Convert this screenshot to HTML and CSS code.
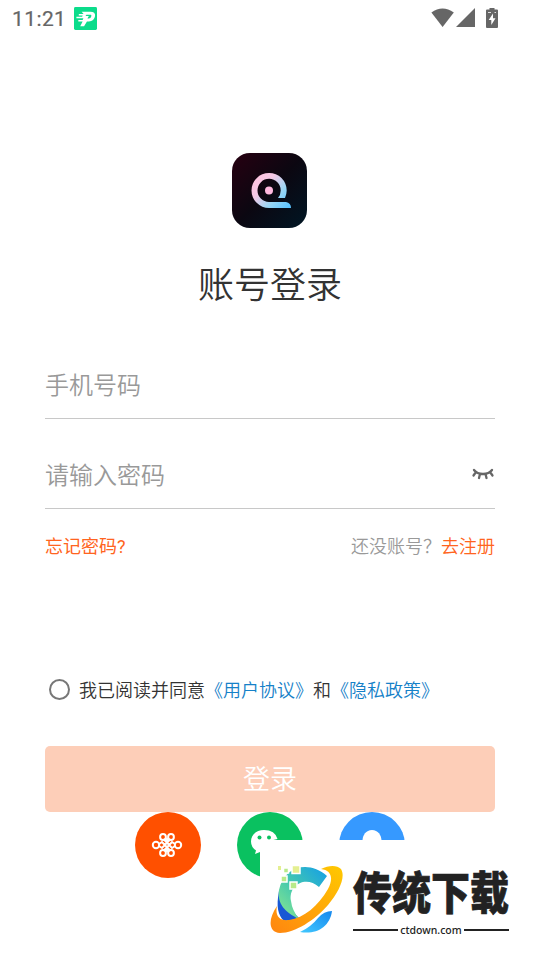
FILE: index.html
```html
<!DOCTYPE html>
<html lang="zh-CN">
<head>
<meta charset="utf-8">
<title>账号登录</title>
<link rel="stylesheet" href="styles.css">
</head>
<body>
<header class="status">
  <span class="clock">11:21</span>
  <svg class="app-badge" width="23" height="23" viewBox="0 0 24 24">
    <rect width="24" height="24" rx="1.5" fill="#0bdc8b"/>
    <path d="M8 5H17Q22.500 5 22 9.500Q21 15 15.500 15H13.500L10.500 20H6.500L9 15H4.500V13.500H9L9.800 11.800H2.500V10.300H8.500L9 8.800H5V7.300H10Z" fill="#fff"/>
    <path d="M13 8H17.500Q18.500 8 18 9.800Q17.500 12 15.500 12H14L15.500 9.500H12Z" fill="#0bdc8b"/>
  </svg>
  <div class="signals">
    <svg width="24" height="20" viewBox="0 0 24 20"><path d="M.4 4.400Q11.500-3.400 22.800 4.400L11.600 19Z" fill="#666"/></svg>
    <svg width="20" height="20" viewBox="0 0 20 20"><path d="M19 0V19H0Z" fill="#666"/></svg>
    <svg class="battery" width="12" height="20" viewBox="0 0 12 20"><path d="M3.500 0H8.500V1.500H11Q12 1.500 12 2.500V19Q12 20 11 20H1Q0 20 0 19V2.500Q0 1.500 1 1.500H3.500Z" fill="#666"/><path d="M7 5.500L2.700 12H5.300V17L9.500 10.300H7Z" fill="#fff"/><path d="M2 4.500H5M8.500 4.500H10" stroke="#ddd"/></svg>
  </div>
</header>
<main class="login">
  <svg class="logo" width="75" height="75" viewBox="0 0 75 75">
    <defs>
      <linearGradient id="night" x1="0" y1="0" x2="1" y2="1"><stop offset="0" stop-color="#270011"/><stop offset=".5" stop-color="#0b0711"/><stop offset="1" stop-color="#001624"/></linearGradient>
      <linearGradient id="glow" gradientUnits="userSpaceOnUse" x1="22" y1="24" x2="56" y2="55"><stop offset="0" stop-color="#ffc3df"/><stop offset=".3" stop-color="#f5c9e6"/><stop offset=".65" stop-color="#9bd6f4"/><stop offset="1" stop-color="#5bc4ff"/></linearGradient>
    </defs>
    <rect width="75" height="75" rx="18" fill="url(#night)"/>
    <path d="M37 20A17.500 17.500 0 0 0 37 55H59Q59 50 54 49H37A11.600 11.600 0 1 1 48.700 37.500Q48.700 42 46 45H53Q54.700 41 54.700 37.500A17.500 17.500 0 0 0 37 20Z" fill="url(#glow)"/>
    <circle cx="37" cy="37.500" r="4" fill="#ffb9df"/>
  </svg>
  <h1 class="title">账号登录</h1>
  <div class="field"><span>手机号码</span></div>
  <div class="field">
    <span>请输入密码</span>
    <svg class="eye" width="24" height="14" viewBox="0 0 24 14" fill="none" stroke="#666" stroke-width="2.300" stroke-linecap="round"><path d="M3 2Q6 6 12 6T21 2M5 4L2.500 7.500M9 6L8 10M14.500 6L15.500 10M19 4L21.500 7.500"/></svg>
  </div>
  <div class="links">
    <a class="orange forgot">忘记密码?</a>
    <span class="register">还没账号？<a class="orange">去注册</a></span>
  </div>
  <div class="agreement"><span class="radio"></span><span>我已阅读并同意<a>《用户协议》</a>和<a>《隐私政策》</a></span></div>
  <button class="submit">登录</button>
  <div class="socials">
    <svg width="66" height="66" viewBox="0 0 66 66"><circle cx="33" cy="33" r="33" fill="#ff5000"/>
      <g fill="none" stroke="#fff" stroke-width="2"><circle cx="21" cy="33" r="3.200"/><circle cx="43" cy="33" r="3.200"/><circle cx="28" cy="25" r="2.900"/><circle cx="36" cy="25" r="2.900"/><circle cx="28" cy="41" r="2.900"/><circle cx="36" cy="41" r="2.900"/><path d="M24 32L27 30L35.500 39M24 34L27 36L35.500 27M40 32L37 30L28.500 39M40 34L37 36L28.500 27M30.500 26L32 28L33.500 26M30.500 40L32 38L33.500 40"/></g>
    </svg>
    <svg width="66" height="66" viewBox="0 0 66 66"><circle cx="33" cy="33" r="33" fill="#0ac160"/><path d="M27 18C19 18 14 23 14 29.500Q14 35 19 38.500L18 42L23 40Q27 41 31 40Q30 28 40.500 27Q38 18 27 18Z" fill="#fff"/><circle cx="22.500" cy="25.500" r="2" fill="#0ac160"/><circle cx="32" cy="25.500" r="2" fill="#0ac160"/></svg>
    <svg width="66" height="66" viewBox="0 0 66 66"><circle cx="33" cy="33" r="33" fill="#3699ff"/><path d="M23.500 29C23.500 23 27 18 33 18S42.500 23 42.500 29V40H23.500Z" fill="#fff"/></svg>
  </div>
</main>
<aside class="watermark">
  <svg class="swirl" width="80" height="80" viewBox="0 0 80 80">
    <defs>
      <linearGradient id="sea" x1="0" y1="1" x2="1" y2="0"><stop offset="0" stop-color="#8ee88e"/><stop offset=".45" stop-color="#45c9ad"/><stop offset="1" stop-color="#139ee9"/></linearGradient>
      <linearGradient id="sun" x1="0" y1="1" x2="1" y2="0"><stop offset="0" stop-color="#ff8510"/><stop offset="1" stop-color="#ffc900"/></linearGradient>
      <linearGradient id="sky" x1="0" y1="1" x2="1" y2="0"><stop offset="0" stop-color="#43c9ff"/><stop offset="1" stop-color="#1688ee"/></linearGradient>
    </defs>
    <path d="M9 31C6 47 8 55 14 61L30 59C20 50 15 40 15 29Z" fill="#1858d5"/>
    <path d="M9 30C14 6 39 0 57 16L49 27C36 15 18 25 21 41Q22 50 29 59C15 52 7 44 9 30Z" fill="url(#sea)"/>
    <path d="M30 72C46 75 60 67 62 51Q54 51 48 58Q41 67 30 72Z" fill="url(#sky)"/>
    <path d="M51 9C59 5 67 5 71 9C76 17 69 32 58 45C45 60 25 73 10 73C-2 72-2 59 7 46C5 56 9 61 19 60C34 58 48 46 58 29C64 18 61 10 51 9Z" fill="url(#sun)"/>
    <g stroke="#fff" stroke-width="1.500"><path d="M22 5.500H30V13.500H22Z" fill="#e4ef91"/><path d="M20 22H27V29H20ZM11 16H17V22H11ZM13.500 8H18.500V13H13.500Z" fill="#b8ea8a"/></g><path d="M8 6H11V10H8Z" fill="#e4ef91"/>
  </svg>
  <div class="brand"><div class="brand-name">传统下载</div><div class="domain">ctdown.com</div></div>
</aside>
</body>
</html>
```
FILE: styles.css
```css
* { box-sizing: border-box; }
body { margin: 0; width: 540px; height: 960px; overflow: hidden; position: relative; background: #fff; color: #333; font-family: Roboto, "Noto Sans CJK SC", sans-serif; }
svg { display: block; flex: none; }
.status { display: flex; height: 37px; padding: 0 42px 0 12px; align-items: center; }
.clock { font-size: 21px; font-weight: 400; -webkit-text-stroke: .2px #666; letter-spacing: .4px; color: #666; width: 62px; line-height: 24px; }
.signals { display: flex; margin-left: auto; margin-top: -1px; align-items: center; gap: 1px; }
.battery { margin-left: 9px; }
.login { padding: 116px 45px 0; }
.logo { margin: 0 0 0 187px; }
.title { margin: 31px 0 0; height: 54px; line-height: 54px; font-size: 36px; font-weight: 350; text-align: center; }
.field { display: flex; align-items: center; justify-content: space-between; height: 90px; padding-top: 20px; border-bottom: 1px solid #c8c8c8; font-size: 24px; font-weight: 350; color: #999; }
.title + .field { margin-top: 16px; }
.eye { margin-top: 3px; }
.links { display: flex; justify-content: space-between; margin-top: 24px; font-size: 18px; font-weight: 350; line-height: 27px; color: #999; }
.orange { color: #ff6420; }
.forgot { font-weight: 400; }
.agreement { display: flex; align-items: center; margin-top: 115px; padding-left: 4px; gap: 9px; height: 28px; font-size: 18px; font-weight: 350; white-space: nowrap; }
.agreement a { color: #1681c8; }
.radio { width: 21px; height: 21px; border: 2px solid #777; border-radius: 50%; }
.submit { display: block; width: 100%; height: 66px; margin-top: 43px; padding: 2px 0 0; border: 0; border-radius: 5px; background: #fdceb8; color: #fff; font: 350 27px/64px Roboto, "Noto Sans CJK SC", sans-serif; }
.socials { display: flex; justify-content: center; gap: 36px; }
.watermark { position: absolute; left: 260px; top: 840px; width: 280px; height: 120px; padding: 20px 31px 0 10px; display: flex; background: #fff; color: #222; }
.brand { width: 156px; margin-left: 3px; }
.brand-name { font: 900 39px/60px "Noto Sans CJK SC", sans-serif; height: 62px; white-space: nowrap; -webkit-text-stroke: .6px #222; transform: scaleY(1.17); }
.domain { display: flex; align-items: center; gap: 2px; font: 500 10.5px/16px "Noto Sans", sans-serif; }
.domain::before, .domain::after { content: ""; flex: 1; height: 2px; background: #222; }
```
